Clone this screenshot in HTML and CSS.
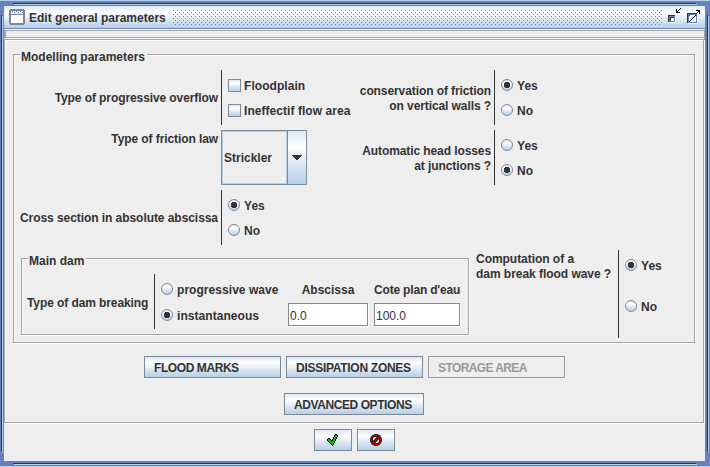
FILE: index.html
```html
<!DOCTYPE html>
<html lang="en">
<head>
<meta charset="utf-8">
<title>Edit general parameters</title>
<link rel="stylesheet" href="styles.css">
</head>
<body>
<div class="window">
  <header class="titlebar">
    <svg class="app-icon" width="16" height="16" viewBox="0 0 16 16" shape-rendering="crispEdges">
      <path fill="#7a8a99" d="M1 0h14v1h1v14h-1v1H1v-1H0V1h1z"/>
      <path fill="#dde8f3" d="M2 2h12v3H2z"/>
      <path fill="#6382bf" d="M3 2h1v1H3zM7 2h1v1H7zM11 2h1v1h-1zM5 3h1v1H5zM9 3h1v1H9zM13 3h1v1h-1z"/>
      <path fill="#fff" d="M2 6h12v8H2z"/>
    </svg>
    <h1>Edit general parameters</h1>
    <svg class="bumps" width="490" height="15" shape-rendering="crispEdges">
      <pattern id="dots" width="4" height="4" patternUnits="userSpaceOnUse">
        <path fill="#6382bf" d="M1 0h1v1H1zM3 2h1v1H3z"/>
      </pattern>
      <rect width="490" height="15" fill="url(#dots)"/>
    </svg>
    <svg class="win-icon" width="16" height="16" viewBox="0 0 16 16" shape-rendering="crispEdges">
      <path fill="#fff" d="M1 8h7v7H1z"/>
      <path fill="#333" d="M0 7h7v7H0z"/>
      <path fill="#6382bf" d="M1 8h6v6H1z"/>
      <path fill="#333" d="M2 9h4v4H2z"/>
      <path fill="#fff" d="M3 10h3v3H3z"/>
      <path fill="#000" d="M12 0h1v1h-1v1h-1v1h-1v1h2v1H8V1h1v2h1V2h1V1h1z"/>
    </svg>
    <svg class="win-icon" width="16" height="16" viewBox="0 0 16 16" shape-rendering="crispEdges">
      <path fill="#fff" d="M1 6h10v10H1z"/>
      <path fill="#333" d="M0 5h10v10H0z"/>
      <path fill="#6382bf" d="M1 6h9v9H1z"/>
      <path fill="#333" d="M2 7h7v7H2z"/>
      <path fill="#eef4fa" d="M3 7h6v7H2V8h1z"/>
      <path fill="#000" d="M2 13h1v-1h1v-1h1v-1h1V9h1V8h1V7h1v1H8v1H7v1H6v1H5v1H4v1H3v1H2zM9 2h4v4h-1V4h-1v1h-1v1H9V5h1V4h1V3H9z"/>
    </svg>
  </header>
  <div class="menubar"></div>
  <main class="panel">
    <section class="group params">
      <h2 class="legend">Modelling parameters</h2>
      <div class="grid">
        <label class="name">Type of progressive overflow</label>
        <div class="options">
          <div class="option"><i class="check"></i>Floodplain</div>
          <div class="option"><i class="check"></i>Ineffectif flow area</div>
        </div>
        <label class="name">conservation of friction<br>on vertical walls ?</label>
        <div class="options">
          <div class="option"><i class="radio on"></i>Yes</div>
          <div class="option"><i class="radio"></i>No</div>
        </div>
        <label class="name top">Type of friction law</label>
        <div class="combo">
          <span class="combo-value">Strickler</span>
          <span class="combo-button"><svg width="10" height="5" viewBox="0 0 10 5" shape-rendering="crispEdges"><path fill="#333" d="M0 0h10v1H9v1H8v1H7v1H6v1H4V4H3V3H2V2H1V1H0z"/></svg></span>
        </div>
        <label class="name">Automatic head losses<br>at junctions ?</label>
        <div class="options">
          <div class="option"><i class="radio"></i>Yes</div>
          <div class="option"><i class="radio on"></i>No</div>
        </div>
        <label class="name wide">Cross section in absolute abscissa</label>
        <div class="options">
          <div class="option"><i class="radio on"></i>Yes</div>
          <div class="option"><i class="radio"></i>No</div>
        </div>
      </div>
      <div class="bottom-row">
        <section class="group dam">
          <h2 class="legend">Main dam</h2>
          <label class="dam-name">Type of dam breaking</label>
          <div class="options dam-options">
            <div class="option"><i class="radio"></i>progressive wave</div>
            <div class="option"><i class="radio on"></i>instantaneous</div>
          </div>
          <div class="field abscissa"><span>Abscissa</span><div class="input">0.0</div></div>
          <div class="field level"><span>Cote plan d'eau</span><div class="input">100.0</div></div>
        </section>
        <label class="wave-name">Computation of a<br>dam break flood wave ?</label>
        <div class="options wave-options">
          <div class="option"><i class="radio on"></i>Yes</div>
          <div class="option"><i class="radio"></i>No</div>
        </div>
      </div>
    </section>
    <div class="actions">
      <div class="button">FLOOD MARKS</div>
      <div class="button zones">DISSIPATION ZONES</div>
      <div class="button disabled">STORAGE AREA</div>
    </div>
    <div class="actions advanced">
      <div class="button">ADVANCED OPTIONS</div>
    </div>
  </main>
  <footer class="footer">
    <div class="button icon-button">
      <svg width="12" height="12" viewBox="0 0 12 12" shape-rendering="crispEdges">
        <path fill="#000" d="M8 0h2v1h1v2h-1v2H9v2H8v2H7v2H6v1H5v-1H4v-1H3V9H2V8H1V7H0V5h1V4h2v1h1v1h1V5h1V3h1V1h1z"/>
        <path fill="#00c000" d="M8 1h2v2H9v2H8v2H7v2H6v2H5v-1H4V9H3V8H2V7H1V5h2v1h1v1h2V5h1V3h1z"/>
      </svg>
    </div>
    <div class="button icon-button">
      <svg width="12" height="12" viewBox="0 0 12 12">
        <circle cx="6" cy="6" r="4.6" fill="none" stroke="#000" stroke-width="2.8"/>
        <path d="M3 9l6-6" stroke="#000" stroke-width="3"/>
        <circle cx="6" cy="6" r="4.6" fill="none" stroke="#d00000" stroke-width="1.2"/>
        <path d="M3 9l6-6" stroke="#d00000" stroke-width="1.1"/>
      </svg>
    </div>
  </footer>
</div>
</body>
</html>
```
FILE: styles.css
```css
:root {
  --metal: linear-gradient(#dde8f3, #fff 30%, #dde8f3 60%, #b8cfe5);
  --blue: #6382bf;
  --ink: #333;
  --edge: #7a8a99;
  --gray: #a3a3a3;
  --face: #eee;
}

* { box-sizing: border-box; }

body {
  margin: 0;
  width: 710px;
  height: 467px;
  overflow: hidden;
  font: bold 12px/15px "Liberation Sans", Arial, sans-serif;
  color: var(--ink);
}

h1, h2 { margin: 0; font: inherit; }
svg { display: block; }

/* The four resize handles are dark grooves with a pale edge. */
.window {
  display: flex;
  flex-direction: column;
  width: 710px;
  height: 467px;
  padding: 6px 5px 6px 4px;
  background:
    linear-gradient(var(--ink), var(--ink)) 13px 3px / 683px 1px no-repeat,
    linear-gradient(#b8cfe5, #b8cfe5) 14px 4px / 683px 1px no-repeat,
    linear-gradient(var(--ink), var(--ink)) 13px 463px / 683px 1px no-repeat,
    linear-gradient(#b8cfe5, #b8cfe5) 14px 464px / 683px 1px no-repeat,
    linear-gradient(var(--ink), var(--ink)) 1px 15px / 1px 437px no-repeat,
    linear-gradient(#b8cfe5, #b8cfe5) 2px 16px / 1px 437px no-repeat,
    linear-gradient(var(--ink), var(--ink)) 707px 15px / 1px 437px no-repeat,
    linear-gradient(#b8cfe5, #b8cfe5) 708px 16px / 1px 437px no-repeat,
    linear-gradient(#b8cfe5, #b8cfe5) 0 0 / 710px 1px no-repeat,
    linear-gradient(#b8cfe5, #b8cfe5) 0 466px / 710px 1px no-repeat,
    var(--blue);
}

.titlebar {
  display: flex;
  align-items: center;
  height: 23px;
  padding-left: 5px;
  background: var(--metal);
  border-bottom: 1px solid var(--blue);
}

.titlebar h1 { flex: none; margin-left: 4px; width: 143px; padding-top: 2px; white-space: nowrap; }

.bumps {
  flex: none;
  align-self: flex-start;
  margin: 4px 6px 0 0;
}

.win-icon { flex: none; margin: -2px 3px 0 0; }
.win-icon:last-child { margin-right: 0; }

.menubar {
  height: 10px;
  background: var(--face);
  border: 1px solid var(--gray);
  border-top-color: #fff;
  border-bottom-color: #fff;
  box-shadow: inset 1px 1px 0 var(--gray), inset 0 -1px 0 var(--gray);
}

.panel {
  height: 384px;
  width: 700px;
  padding: 14px 8px 0;
  background: var(--face);
  border: 1px solid var(--gray);
  box-shadow: inset 1px 1px 0 #fff, 1px 1px 0 #fff;
}

.group {
  position: relative;
  border: 1px solid var(--gray);
  box-shadow: inset 1px 1px 0 #fff, 1px 1px 0 #fff;
}

.legend {
  position: absolute;
  top: -5px;
  left: 6px;
  padding: 0 2px 0 1px;
  background: var(--face);
  white-space: nowrap;
}

.params { width: 682px; height: 289px; padding-top: 15px; }

.grid {
  display: grid;
  grid-template-columns: 207px 131px 142px 1fr;
  grid-auto-rows: 55px;
  row-gap: 5px;
}

.name {
  align-self: center;
  padding: 2px 3px 0 0;
  text-align: right;
  letter-spacing: -0.09px;
  white-space: nowrap;
}

.name.top { align-self: start; }
.name.wide { letter-spacing: -0.06px; }

.options {
  padding: 3px 0 0 6px;
  border-left: 1px solid var(--ink);
}

.option {
  display: flex;
  align-items: flex-start;
  gap: 4px;
  height: 25px;
  line-height: 27px;
  letter-spacing: 0.05px;
  white-space: nowrap;
}

.check {
  width: 13px;
  height: 13px;
  margin: 6px -1px 0 0;
  border: 1px solid var(--edge);
  background: var(--metal);
}

.radio {
  width: 12px;
  height: 12px;
  margin-top: 6px;
  border: 1px solid var(--edge);
  border-radius: 50%;
  background: var(--metal);
}

.radio.on {
  background: radial-gradient(circle, var(--ink) 2.9px, transparent 3.5px), var(--metal);
}

.combo {
  display: flex;
  width: 86px;
  border: 1px solid var(--edge);
}

.combo-value {
  flex: 1;
  padding-left: 1px;
  border: 1px solid #b8cfe5;
  line-height: 52px;
}

.combo-button {
  display: grid;
  place-items: center;
  width: 19px;
  border-left: 1px solid var(--edge);
  background: var(--metal);
}

.bottom-row {
  display: flex;
  height: 88px;
  margin: 5px 0 0 7px;
}

.dam {
  display: flex;
  width: 448px;
  height: 77px;
  margin-top: 8px;
  padding: 15px 0 5px 5px;
}

.dam-name { width: 127px; padding-top: 22px; letter-spacing: -0.09px; }
.dam-options { width: 134px; }
.dam-options .option { height: 26px; }

.field { padding-top: 9px; text-align: center; white-space: nowrap; }
.abscissa { width: 80px; margin-right: 6px; }
.level { width: 86px; letter-spacing: -0.18px; }

.input {
  height: 23px;
  margin-top: 5px;
  padding-left: 1px;
  background: #fff;
  border: 1px solid var(--edge);
  box-shadow: 1px 1px 0 #fff;
  font-weight: normal;
  letter-spacing: 0;
  line-height: 24px;
  text-align: left;
}

.wave-name { width: 149px; padding: 2px 0 0 7px; letter-spacing: -0.04px; white-space: nowrap; }
.wave-options .option + .option { margin-top: 16px; }

.actions { display: flex; gap: 5px; margin: 13px 0 0 131px; }
.actions.advanced { margin: 15px 0 0 271px; }
.advanced .button { width: 140px; }

.button {
  width: 137px;
  height: 22px;
  padding-left: 9px;
  border: 1px solid var(--edge);
  background: var(--metal);
  letter-spacing: -0.42px;
  line-height: 23px;
  white-space: nowrap;
}

.button.zones { letter-spacing: -0.28px; }
.button.disabled { border-color: #999; background: none; color: #999; letter-spacing: -0.6px; }

.footer {
  display: flex;
  gap: 5px;
  flex: 1;
  padding: 5px 0 0 310px;
  background: var(--face);
  border-top: 1px solid #fff;
}

.icon-button { display: grid; place-items: center; width: 38px; padding: 0; }
```
